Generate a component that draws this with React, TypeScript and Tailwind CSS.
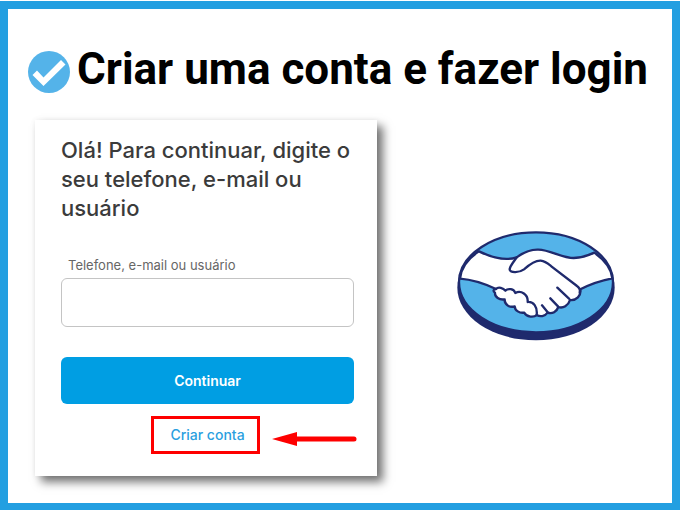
import { useState } from "react";

function CheckBadge() {
  return (
    <svg className="w-[42px] h-[42px] shrink-0 mb-0.5" viewBox="0 0 42 42" aria-hidden="true">
      <circle cx="21" cy="21" r="21" fill="#54b3e9" />
      <path d="M4.5 24 9 19.5 15.5 26.5 33 9 37.5 13.5 15.5 35Z" fill="#fff" />
    </svg>
  );
}

function HandshakeLogo() {
  return (
    <svg className="w-[160px] h-[110px]" viewBox="34 34 480 330" role="img" aria-label="Mercado Pago">
      <ellipse cx="274" cy="204" rx="236" ry="158" fill="#1f2a6d" />
      <ellipse cx="274" cy="188" rx="230" ry="149" fill="#54b3e9" />
      <g stroke="#1f2a6d" strokeWidth="7" strokeLinejoin="round" strokeLinecap="round">
        <path
          d="M103 95C140 113 181 125 216 113C238 97 257 89 281 90C318 91 351 115 387 115C409 114 430 108 449 99C477 119 500 146 503 176C467 183 435 194 407 209C410 229 395 243 376 241C371 258 355 267 341 262C336 276 323 284 309 279C300 291 286 292 276 286C268 294 246 293 239 279C224 281 211 273 210 260C194 265 179 254 180 239C164 242 150 232 151 219C144 214 146 208 154 208C122 193 85 180 46 177C49 145 72 115 103 95Z"
          fill="#fff"
        />
        <path
          d="M216 113C207 127 196 138 195 149C196 159 221 161 238 149C254 135 271 122 288 123C303 125 310 132 320 140L397 199C404 204 408 209 405 219"
          fill="none"
        />
        <path
          d="M154 208C161 200 176 205 182 213C190 205 208 207 212 220C229 210 251 225 249 247C266 245 279 261 276 286M338 204L373 237M317 236L340 260M292 257L309 278"
          fill="none"
        />
      </g>
      <ellipse cx="274" cy="188" rx="231" ry="150" fill="none" stroke="#1f2a6d" strokeWidth="7" />
    </svg>
  );
}

function Arrow() {
  return (
    <svg className="w-[86px] h-4 shrink-0" viewBox="0 0 86 16" aria-hidden="true">
      <path d="M24 8H82" stroke="#fe0000" strokeWidth="5" strokeLinecap="round" />
      <path d="M0 8 25 1V15Z" fill="#fe0000" />
    </svg>
  );
}

function LoginCard() {
  const [user, setUser] = useState("");

  return (
    <form
      onSubmit={(e) => e.preventDefault()}
      className="w-[342px] shrink-0 bg-white pt-4 pb-[22px] pl-[26px] pr-[23px] shadow-[6px_6px_9px_rgba(0,0,0,0.55),0_0_6px_rgba(0,0,0,0.06)]"
    >
      <h2 className="text-[22px] leading-[29px] font-medium text-[#3b3b3b]">
        Olá! Para continuar, digite o seu telefone, e-mail ou usuário
      </h2>
      <label htmlFor="user" className="block mt-8 pl-[7px] text-[13px] leading-5 text-[#666]">
        Telefone, e-mail ou usuário
      </label>
      <input
        id="user"
        type="text"
        value={user}
        onChange={(e) => setUser(e.target.value)}
        className="block w-full h-[49px] mt-[3px] px-3 rounded-md border border-[#c4c4c4] outline-none"
      />
      <button
        type="submit"
        className="block w-full h-[47px] mt-[30px] rounded-md bg-[#009ee3] text-sm font-semibold text-white"
      >
        Continuar
      </button>
      <div className="grid grid-cols-[minmax(0,1fr)_auto_minmax(0,1fr)] items-center mt-3 pr-1">
        <a
          href="#criar-conta"
          className="col-start-2 pl-4 pr-3 py-2 border-[3px] border-[#fe0000] text-sm leading-4 font-medium text-[#2b9fe0]"
        >
          Criar conta
        </a>
        <div className="flex pt-2 pl-3">
          <Arrow />
        </div>
      </div>
    </form>
  );
}

export default function App() {
  return (
    <div className="min-h-screen flex flex-col bg-white pt-px font-['Inter',sans-serif]">
      <main className="grow border-8 border-b-[7px] border-[#239fe1] pt-[34px] pb-[26px] pl-5 pr-4">
        <header className="flex items-end gap-[7px]">
          <CheckBadge />
          <h1 className="font-['Roboto',sans-serif] text-[44px] leading-[52px] font-bold text-black whitespace-nowrap">
            Criar uma conta e fazer login
          </h1>
        </header>
        <div className="flex items-center mt-[25px] pl-[7px]">
          <LoginCard />
          <div className="grow flex justify-center pl-[38px] pb-6">
            <HandshakeLogo />
          </div>
        </div>
      </main>
    </div>
  );
}
